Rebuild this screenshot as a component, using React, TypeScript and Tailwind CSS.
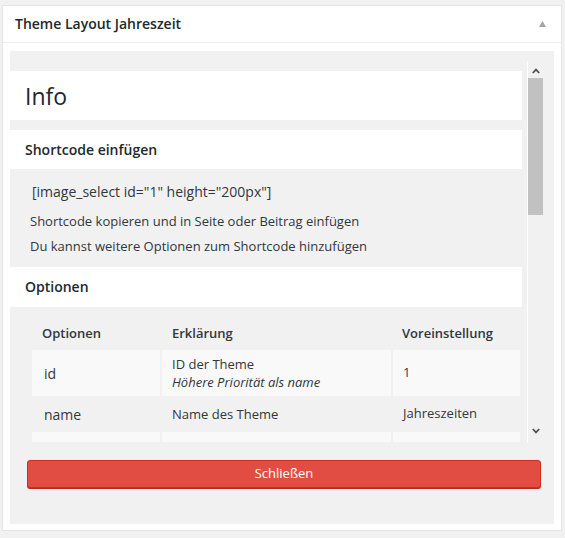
import React from "react";

function Chevron({ up }: { up?: boolean }) {
  return (
    <svg width="8" height="6" viewBox="0 0 8 6" className={up ? "" : "rotate-180"}>
      <path d="M0.8 5 L4 1.6 L7.2 5" fill="none" stroke="#505050" strokeWidth="1.8" />
    </svg>
  );
}

const rows = [
  { opt: "id", desc: "ID der Theme", note: "Höhere Priorität als name", def: "1", shaded: true, h: "h-[46px]" },
  { opt: "name", desc: "Name des Theme", note: "", def: "Jahreszeiten", shaded: false, h: "h-[36px]" },
  { opt: "", desc: "", note: "", def: "", shaded: true, h: "h-[46px]" },
];

export default function App() {
  return (
    <div className="min-h-[538px] bg-[#f1f1f1] pl-[2px] pt-[5px] font-['Open_Sans',sans-serif] text-[#32373c]">
      <div className="flex h-[526px] w-[560px] flex-col border border-[#e5e5e5] bg-white">
        {/* header */}
        <div className="flex h-[37px] shrink-0 items-center justify-between border-b border-[#eeeeee] pl-[12px] pr-[15px]">
          <span className="text-[14px] font-semibold leading-none text-[#23282d]">Theme Layout Jahreszeit</span>
          <svg width="7" height="6" viewBox="0 0 7 6">
            <path d="M3.5 0 L7 6 L0 6 Z" fill="#a0a5aa" />
          </svg>
        </div>

        <div className="px-[7px] pb-[6px] pt-[8px]">
          <div className="flex h-[473px] flex-col bg-[#f1f1f1] pt-[10px]">
            <div className="flex h-[381px] shrink-0">
              {/* scrolled content */}
              <div className="w-[517px] overflow-hidden pr-[5px] pt-[10px]">
                <div className="flex h-[49px] items-center bg-white px-[15px] pt-[2px]">
                  <h1 className="text-[23px] font-normal leading-none text-[#23282d]">Info</h1>
                </div>

                <div className="mt-[10px] flex h-[39px] items-center bg-white px-[15px]">
                  <h2 className="text-[14px] font-semibold leading-none text-[#23282d]">Shortcode einfügen</h2>
                </div>

                <div className="h-[98px] pt-[13px]">
                  <p className="pl-[22px] text-[14px] leading-[20px]">[image_select id="1" height="200px"]</p>
                  <p className="mt-[9px] pl-[20px] text-[13px] leading-[20px]">Shortcode kopieren und in Seite oder Beitrag einfügen</p>
                  <p className="mt-[5px] pl-[20px] text-[13px] leading-[20px]">Du kannst weitere Optionen zum Shortcode hinzufügen</p>
                </div>

                <div className="flex h-[40px] items-center bg-white px-[15px]">
                  <h2 className="text-[14px] font-semibold leading-none text-[#23282d]">Optionen</h2>
                </div>

                <div className="pl-[22px] pt-[11px]">
                  <div className="grid grid-cols-[128px_229px_127px] gap-x-[2px]">
                    <div className="flex h-[32px] items-center pl-[10px] text-[13px] font-semibold">Optionen</div>
                    <div className="flex h-[32px] items-center pl-[10px] text-[13px] font-semibold">Erklärung</div>
                    <div className="flex h-[32px] items-center pl-[9px] text-[13px] font-semibold">Voreinstellung</div>

                    {rows.map((r, i) => (
                      <React.Fragment key={i}>
                        <div className={`flex ${r.h} items-center pl-[12px] text-[14px] ${r.shaded ? "bg-[#f9f9f9]" : ""}`}>
                          {r.opt}
                        </div>
                        <div className={`flex ${r.h} flex-col justify-center pl-[10px] text-[13px] leading-[18px] ${r.shaded ? "bg-[#f9f9f9]" : ""}`}>
                          <span>{r.desc}</span>
                          {r.note && <span className="italic">{r.note}</span>}
                        </div>
                        <div className={`flex ${r.h} items-center pl-[10px] text-[13px] ${r.shaded ? "bg-[#f9f9f9]" : ""}`}>
                          {r.def}
                        </div>
                      </React.Fragment>
                    ))}
                  </div>
                </div>
              </div>

              {/* scrollbar */}
              <div className="flex w-[16px] flex-col border-l border-white">
                <div className="flex h-[17px] items-center justify-center pt-[2px]">
                  <Chevron up />
                </div>
                <div className="h-[137px] bg-[#c1c1c1]" />
                <div className="flex-1" />
                <div className="flex h-[17px] items-center justify-center pb-[6px]">
                  <Chevron />
                </div>
              </div>
            </div>

            <div className="ml-[17px] mt-[18px]">
              <button className="flex h-[28px] w-[514px] items-center justify-center rounded-[3px] border border-[#d02c21] bg-[#e14d43] text-[13px] text-white shadow-[0_1px_0_#ba281e]">
                Schließen
              </button>
            </div>
          </div>
        </div>
      </div>
    </div>
  );
}
